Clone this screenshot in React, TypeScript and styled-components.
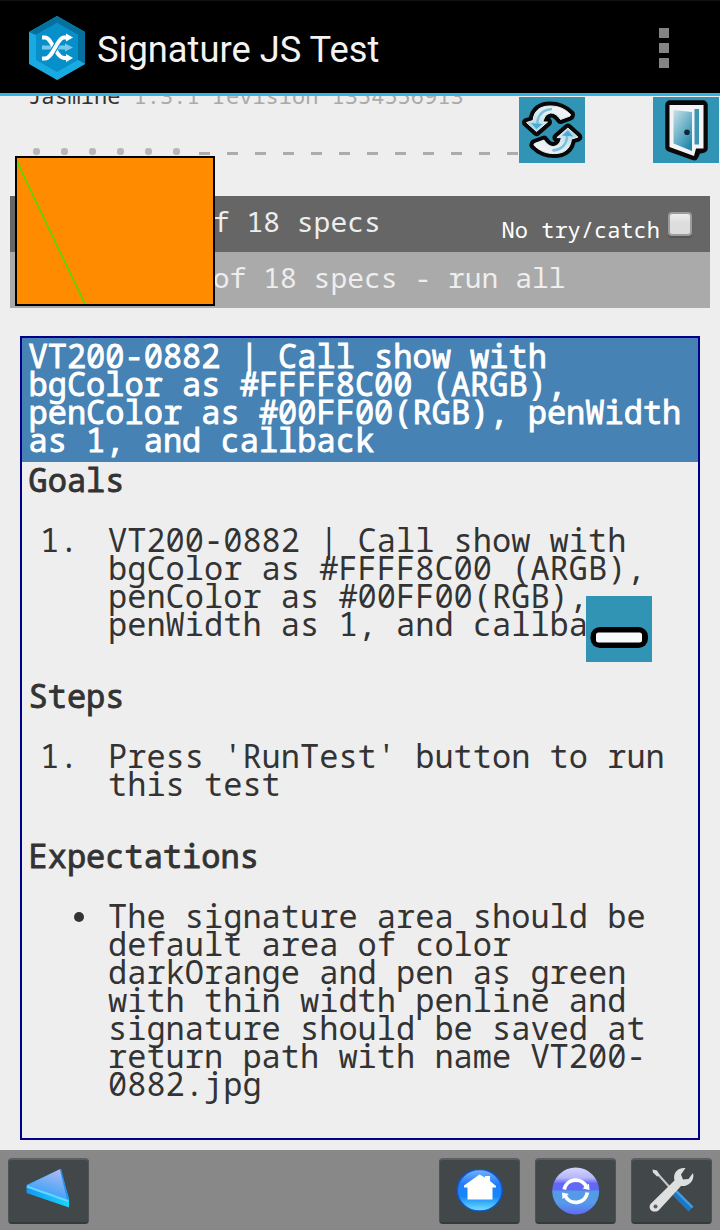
import React from 'react';
import styled, { createGlobalStyle } from 'styled-components';

const mono = `'Droid Sans Mono', 'Noto Sans Mono', 'DejaVu Sans Mono', monospace`;

const GlobalStyle = createGlobalStyle`
  * { box-sizing: border-box; }
  body { margin: 0; background: #eeeeee; }
`;

const Screen = styled.div`
  position: relative;
  width: 720px;
  height: 1230px;
  display: flex;
  flex-direction: column;
  overflow: hidden;
  background: #eeeeee;
  color: #333333;
  font-family: ${mono};
`;

const ActionBar = styled.header`
  flex: none;
  display: flex;
  align-items: center;
  height: 96px;
  padding: 2px 51px 0 28px;
  background: #000;
  border-top: 1px solid #111;
  border-bottom: 3px solid #33b5e5;
`;

const Title = styled.h1`
  flex: 1;
  margin: 4px 0 0 11px;
  font: 400 36.3px/42px Roboto, sans-serif;
  color: #f3f3f3;
  white-space: nowrap;
`;

const Overflow = styled.div`
  display: grid;
  gap: 5px;
  i { width: 10px; height: 10px; background: #848484; }
`;

const Reporter = styled.main`
  flex: 1;
  min-height: 0;
  overflow: hidden;
  padding: 0 10px;
`;

const Banner = styled.div`
  height: 28px;
  margin-top: -15px;
  padding-left: 18px;
  font-size: 22px;
  line-height: 28px;
  white-space: pre;
  span { color: #aaaaaa; }
`;

const Symbols = styled.div`
  display: flex;
  height: 28px;
  margin: 27px 0 0 12px;
  align-items: center;
`;

const Mark = styled.i<{ $passed?: boolean }>`
  width: ${p => (p.$passed ? 7 : 11)}px;
  height: ${p => (p.$passed ? 7 : 3)}px;
  margin: ${p => (p.$passed ? '3px 10.5px 0' : '7px 8.5px 0')};
  border-radius: ${p => (p.$passed ? '3px' : 0)};
  background: ${p => (p.$passed ? '#b7b7b7' : '#acacac')};
`;

const Bar = styled.div<{ $tone: string; $indent: number }>`
  display: flex;
  justify-content: space-between;
  height: 56px;
  padding: 0 18px 0 ${p => p.$indent}px;
  background: ${p => p.$tone};
  color: #eeeeee;
  font-size: 28px;
  line-height: 51px;
  white-space: pre;
`;

const Alerts = styled.div`
  margin-top: 32px;
`;

const TryCatch = styled.label`
  display: flex;
  align-items: flex-start;
  gap: 8px;
  font-size: 22px;
  line-height: 67px;
  color: #fff;
`;

const CheckBox = styled.i`
  width: 24px;
  height: 24px;
  margin-top: 16px;
  border: 2px solid #9c9c9c;
  border-radius: 4px;
  background: linear-gradient(#eeeeee, #dddddd 45%);
  box-shadow: 0 2px 1px #555;
`;

const Spec = styled.section`
  height: 804px;
  margin: 28px 10px 0;
  border: 2px solid #00008b;
  font-size: 32px;
  line-height: 28px;
  white-space: nowrap;
`;

const SpecTitle = styled.h2`
  height: 124px;
  margin: 0;
  padding: 4px 6.5px 0;
  background: #4682b4;
  color: #fff;
  font: inherit;
  -webkit-text-stroke: 0.9px;
`;

const Heading = styled.h3`
  margin: 0;
  padding: 4px 6.5px 0;
  font: inherit;
  -webkit-text-stroke: 0.9px;
`;

const Entry = styled.div`
  display: flex;
  margin: 32px 0 40px;
  padding-left: 18px;
`;

const Marker = styled.span`
  flex: none;
  width: 68px;
`;

const Bullet = styled.span`
  flex: none;
  width: 10px;
  height: 10px;
  margin: 10px 24px 0 34px;
  border-radius: 50%;
  background: #333;
`;

const Signature = styled.div`
  position: absolute;
  left: 15px;
  top: 156px;
  width: 200px;
  height: 150px;
  border: 2px solid #000;
  background: #ff8c00;
  svg { display: block; }
`;

const Tile = styled.div<{ $x: number; $y: number }>`
  position: absolute;
  left: ${p => p.$x}px;
  top: ${p => p.$y}px;
  width: 66px;
  height: 66px;
  background: #3194b4;
  svg { display: block; filter: blur(0.6px); }
`;

const Toolbar = styled.nav`
  flex: none;
  display: flex;
  gap: 15px;
  height: 80px;
  padding: 8px 8px 0;
  background: #888888;
`;

const ToolButton = styled.button<{ $first?: boolean }>`
  width: 81px;
  height: 66px;
  padding: 0;
  margin-right: ${p => (p.$first ? 'auto' : 0)};
  border: 1px solid #505356;
  border-top: 2px solid #5b5e60;
  border-bottom: 2px solid #35393b;
  border-radius: 4px;
  background: #42474a;
  svg { display: block; margin: -1px 0 0 -1px; filter: blur(0.4px); }
`;

const Logo = () => (
  <svg width="58" height="66" viewBox="28 15 58 66">
    <path d="M57 16 85 32V64L57 80 29 64V32Z" fill="#1aaae2" />
    <path d="M57 16 85 32V64L78 60V35L57 23 36 35 29 32Z" fill="#05719e" />
    <path d="M57 72 78 60 85 64 57 80Z" fill="#1aaae2" />
    <path d="M57 23 78 35V60L57 72 36 60V35Z" fill="#078fc9" />
    <path d="M42 47.500H66" stroke="#78c8eb" strokeWidth="4" />
    <path d="m65 43.500 8 4-8 4z" fill="#78c8eb" />
    <path d="M42 37.500h3c7 0 11 20.500 19 20.500h3" fill="none" stroke="#fff" strokeWidth="3.800" />
    <path d="M42 58.500h3c8 0 12-21 19-21h3" fill="none" stroke="#078fc9" strokeWidth="6" />
    <path d="M42 58.500h3c8 0 12-21 19-21h3" fill="none" stroke="#fff" strokeWidth="3.800" />
    <path d="m66 33.500 7 4-7 4zm0 20.500 7 4-7 4z" fill="#fff" />
  </svg>
);

const arrow = 'M17.500 34.500 7.500 25.500 14 23.500C15 13 22 9 31 9 40 9 46 12 51.500 17.500L51 19 41.500 22.500C38 17.500 34 15 30 16.500 26 18 25 21 24 25L28.500 25Z';

const Cycle = () => (
  <svg width="66" height="66">
    <defs>
      <linearGradient id="cyc" x1="0.1" y1="0.9" x2="0.9" y2="0.2">
        <stop offset="0" stopColor="#a4d5e7" /><stop offset=".5" stopColor="#d9edf5" /><stop offset="1" stopColor="#f4f4f6" />
      </linearGradient>
    </defs>
    {[0, 180].map(a => (
      <path key={a} transform={`rotate(${a} 33.2 32.8)`} d={arrow} fill="#080808" stroke="#080808" strokeWidth="9" strokeLinejoin="round" />
    ))}
    {[0, 180].map(a => (
      <g key={a} transform={`rotate(${a} 33.2 32.8)`}>
        <path d={arrow} fill="url(#cyc)" stroke="#eaf3f7" strokeWidth="1" strokeLinejoin="round" />
        <path d="M18.500 28V24C20 16 25 12.500 33 12" fill="none" stroke="#7cc2dc" strokeWidth="2.500" />
        <path d="m12 26 5.500 6 6-5z" fill="#4babd0" />
      </g>
    ))}
  </svg>
);

const Door = () => (
  <svg width="66" height="66">
    <defs>
      <linearGradient id="door" x1="0" y1="0" x2=".7" y2="1">
        <stop offset="0" stopColor="#c8e2ea" /><stop offset="1" stopColor="#238aae" />
      </linearGradient>
    </defs>
    <path d="M17 8H50V51L43.500 52.500 41 58.500 17 50Z" fill="#fff" stroke="#080808" strokeWidth="9.500" strokeLinejoin="round" />
    <path d="M16.500 8H50.500V51.500H43L41 59 16.500 50Z" fill="#f4f4f6" />
    <path d="M20.500 13 39 15V54L20.500 46.500Z" fill="url(#door)" />
    <path d="M41.500 12H46V47.500H41.500Z" fill="#3b96b5" />
    <circle cx="34" cy="35.300" r="2.800" fill="#102535" />
  </svg>
);

const Minus = () => (
  <svg width="66" height="66">
    <rect x="4.500" y="31" width="57.500" height="21" rx="9.500" fill="#000" />
    <rect x="10" y="36.500" width="46" height="10" rx="2.500" fill="#f8fbfd" />
  </svg>
);

const Back = () => (
  <svg width="81" height="66">
    <defs>
      <linearGradient id="bk" x1=".8" y1="0" x2=".4" y2="1">
        <stop offset="0" stopColor="#b4bcf6" /><stop offset=".5" stopColor="#6cacf4" /><stop offset="1" stopColor="#2b9fff" />
      </linearGradient>
      <linearGradient id="bk2"><stop offset="0" stopColor="#1696f5" /><stop offset="1" stopColor="#18d5fa" /></linearGradient>
    </defs>
    <path d="M52.500 10 61 40 61 48.500 18.500 34V26Z" fill="url(#bk2)" />
    <path d="M52.500 10 60 41 18.500 26.500Z" fill="url(#bk)" />
    <path d="M52.500 10 60 41" stroke="#298cf0" strokeWidth="1.500" />
    <path d="M19 27.500 60 42" stroke="#67d5ff" strokeWidth="2" />
  </svg>
);

const Home = () => (
  <svg width="81" height="66">
    <defs>
      <linearGradient id="hm" x1="0" y1="0" x2="0" y2="1">
        <stop offset="0" stopColor="#75b4ff" /><stop offset=".35" stopColor="#237cf5" /><stop offset=".65" stopColor="#1687fa" /><stop offset="1" stopColor="#72e4ff" />
      </linearGradient>
    </defs>
    <ellipse cx="40.700" cy="31.300" rx="22.500" ry="20.800" fill="url(#hm)" stroke="#1355c5" strokeWidth="1.500" />
    <path d="M40.500 15.500 46 18.500V17H51V22L57 27V28.500H53.500V40.500H28.500V28.500H25V26.500Z" fill="#fff" />
  </svg>
);

const Reload = () => (
  <svg width="81" height="66">
    <defs>
      <linearGradient id="rl" x1="0" y1="0" x2="0" y2="1">
        <stop offset="0" stopColor="#d5d5ff" /><stop offset=".22" stopColor="#b5b7fa" /><stop offset=".34" stopColor="#6168f5" /><stop offset=".48" stopColor="#6269f4" /><stop offset=".5" stopColor="#529be5" /><stop offset=".75" stopColor="#559be9" /><stop offset="1" stopColor="#606bf5" />
      </linearGradient>
    </defs>
    <circle cx="40.700" cy="32" r="23.500" fill="url(#rl)" />
    <g fill="none" stroke="#fff" strokeWidth="3.800">
      <path d="M29.200 30.500A11.800 11.800 0 0 1 51.500 28" />
      <path d="M52.400 33.500A11.800 11.800 0 0 1 30 36.500" />
    </g>
    <path d="M54 24.500 54.500 31 47.500 29.500ZM27.500 40 27 33.500 34 35Z" fill="#fff" />
  </svg>
);

const Tools = () => (
  <svg width="81" height="66">
    <path d="M24 12 43 33" stroke="#c6c9ca" strokeWidth="2" />
    <path d="m21.500 10.500 4.500 1 3 5-3 1-4-4z" fill="#d9dbdc" />
    <path d="M42.500 32 60 50" stroke="#1e78c0" strokeWidth="7" />
    <path d="M44 31 61.500 48.500" stroke="#4b9cdb" strokeWidth="2" />
    <path d="M19.500 45 43.500 21.500C41.500 14 47 8 54.500 9L50 15.500 52 20.500 57.500 20 62 14C64 21 58 28 50 27L28 51C24 55 16 51 19.500 45Z" fill="#dedfdf" />
    <circle cx="24.500" cy="47.500" r="2" fill="#5a5d5f" />
  </svg>
);

const marks = Array.from({ length: 18 }, (_, i) => i < 6);

export default function App() {
  return (
    <Screen>
      <GlobalStyle />
      <ActionBar>
        <Logo />
        <Title>Signature JS Test</Title>
        <Overflow><i /><i /><i /></Overflow>
      </ActionBar>
      <Reporter>
        <Banner>Jasmine <span>1.3.1 revision 1354556913</span></Banner>
        <Symbols>{marks.map((passed, i) => <Mark key={i} $passed={passed} />)}</Symbols>
        <Alerts>
          <Bar $tone="#666666" $indent={18}>
            <span>Running 0 of 18 specs</span>
            <TryCatch>No try/catch<CheckBox /></TryCatch>
          </Bar>
          <Bar $tone="#aaaaaa" $indent={102}>Ran 1 of 18 specs - run all</Bar>
        </Alerts>
        <Spec>
          <SpecTitle>
            VT200-0882 | Call show with<br />bgColor as #FFFF8C00 (ARGB),<br />
            penColor as #00FF00(RGB), penWidth<br />as 1, and callback
          </SpecTitle>
          <Heading>Goals</Heading>
          <Entry>
            <Marker>1.</Marker>
            <div>
              VT200-0882 | Call show with<br />bgColor as #FFFF8C00 (ARGB),<br />
              penColor as #00FF00(RGB),<br />penWidth as 1, and callback
            </div>
          </Entry>
          <Heading>Steps</Heading>
          <Entry>
            <Marker>1.</Marker>
            <div>Press 'RunTest' button to run<br />this test</div>
          </Entry>
          <Heading>Expectations</Heading>
          <Entry>
            <Bullet />
            <div>
              The signature area should be<br />default area of color<br />darkOrange and pen as green<br />
              with thin width penline and<br />signature should be saved at<br />return path with name VT200-<br />0882.jpg
            </div>
          </Entry>
        </Spec>
      </Reporter>
      <Toolbar>
        <ToolButton $first aria-label="Back"><Back /></ToolButton>
        <ToolButton aria-label="Home"><Home /></ToolButton>
        <ToolButton aria-label="Reload"><Reload /></ToolButton>
        <ToolButton aria-label="Settings"><Tools /></ToolButton>
      </Toolbar>
      <Tile $x={519} $y={97}><Cycle /></Tile>
      <Tile $x={653} $y={97}><Door /></Tile>
      <Tile $x={586} $y={596}><Minus /></Tile>
      <Signature>
        <svg width="196" height="146"><path d="M0 2C3 12 8 20 12 29L68 146" fill="none" stroke="#44e000" strokeWidth="1.500" /></svg>
      </Signature>
    </Screen>
  );
}
